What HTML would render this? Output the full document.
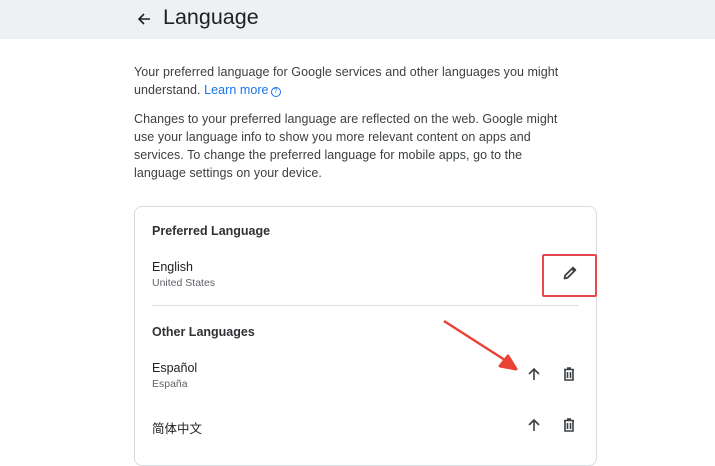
<!DOCTYPE html>
<html><head><meta charset="utf-8"><style>
*{margin:0;padding:0;box-sizing:border-box}
body{width:715px;height:450px;overflow:hidden;background:#fff;font-family:"Liberation Sans","Noto Sans CJK SC",sans-serif;color:#202124;position:relative}
.hdr{position:absolute;left:0;top:0;width:715px;height:39px;background:#eef0f4}
.t{position:absolute;white-space:nowrap}
.p{font-size:12.5px;color:#3c4043;line-height:18px;letter-spacing:0.05px}
.card{position:absolute;left:134px;top:206px;width:463px;height:260px;border:1px solid #dadce0;border-radius:8px}
.h{font-size:12.5px;font-weight:bold;color:#303134}
.n{font-size:12.5px;color:#202124}
.s{font-size:10.5px;color:#5f6368}
</style></head><body>
<div class="hdr"></div>
<svg class="t" style="left:136px;top:11px" width="16" height="16" viewBox="0 0 16 16"><path d="M14 8H3M8 3L3 8l5 5" stroke="#202124" stroke-width="1.6" fill="none"/></svg>
<div class="t" style="left:163px;top:5px;font-size:21.5px;color:#202124">Language</div>
<div class="t p" style="left:134px;top:63px">Your preferred language for Google services and other languages you might<br>understand. <span style="color:#1a73e8">Learn more</span><span style="display:inline-block;width:10px;height:10px;border:1px solid #1a73e8;border-radius:50%;font-size:7px;color:#1a73e8;text-align:center;line-height:8px;margin-left:2px;vertical-align:1px">?</span></div>
<div class="t p" style="left:134px;top:110px">Changes to your preferred language are reflected on the web. Google might<br>use your language info to show you more relevant content on apps and<br>services. To change the preferred language for mobile apps, go to the<br>language settings on your device.</div>
<div class="card"></div>
<div class="t h" style="left:152px;top:224px">Preferred Language</div>
<div class="t n" style="left:152px;top:260px">English</div>
<div class="t s" style="left:152px;top:277px">United States</div>
<div style="position:absolute;left:152px;top:305px;width:427px;height:1px;background:#e0e0e0"></div>
<div class="t h" style="left:152px;top:325px">Other Languages</div>
<div class="t n" style="left:152px;top:361px">Español</div>
<div class="t s" style="left:152px;top:378px">España</div>
<div class="t n" style="left:152px;top:418px">简体中文</div>
<div style="position:absolute;left:542px;top:254px;width:55px;height:43px;border:2px solid #e5484d;border-radius:2px"></div>
<svg class="t" style="left:562px;top:265px" width="16" height="16" viewBox="0 0 16 16"><path d="M2.5 13.5l.6-3L11 2.6l2.4 2.4-7.9 7.9z M9.8 3.8l2.4 2.4" stroke="#3c4043" stroke-width="1.8" fill="none" stroke-linejoin="round"/></svg>
<svg class="t" style="left:526px;top:366px" width="16" height="16" viewBox="0 0 16 16"><path d="M8 14V3M3 8l5-5 5 5" stroke="#3c4043" stroke-width="1.6" fill="none"/></svg>
<svg class="t" style="left:561px;top:366px" width="16" height="16" viewBox="0 0 16 16"><path d="M3 3.5h10M6 2h4M4 4v10h8V4M6.5 6v6M9.5 6v6" stroke="#3c4043" stroke-width="1.6" fill="none"/></svg>
<svg class="t" style="left:526px;top:417px" width="16" height="16" viewBox="0 0 16 16"><path d="M8 14V3M3 8l5-5 5 5" stroke="#3c4043" stroke-width="1.6" fill="none"/></svg>
<svg class="t" style="left:561px;top:417px" width="16" height="16" viewBox="0 0 16 16"><path d="M3 3.5h10M6 2h4M4 4v10h8V4M6.5 6v6M9.5 6v6" stroke="#3c4043" stroke-width="1.6" fill="none"/></svg>
<svg class="t" style="left:0;top:0" width="715" height="450"><path d="M444 321L508 362" stroke="#ea4335" stroke-width="2.5"/><path d="M516 369L500 366 508 356z" fill="#ea4335" stroke="#ea4335" stroke-width="3" stroke-linejoin="round"/></svg>
</body></html>
